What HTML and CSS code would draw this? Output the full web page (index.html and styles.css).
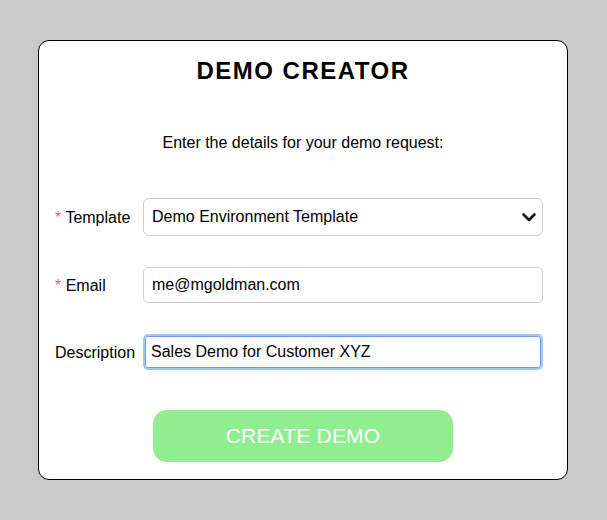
FILE: index.html
```html
<!DOCTYPE html>
<html>
<head>
<meta charset="utf-8">
<link rel="stylesheet" href="styles.css">
</head>
<body>
<div class="card">
  <h1 class="title">DEMO CREATOR</h1>
  <p class="intro">Enter the details for your demo request:</p>
  <div class="row row-template">
    <label class="label"><span class="req">*</span> Template</label>
    <div class="select">
      <span>Demo Environment Template</span>
      <svg class="chev" width="14" height="9" viewBox="0 0 14 9"><path d="M1.5 1.5 L7 7 L12.5 1.5" fill="none" stroke="#111" stroke-width="2.6" stroke-linecap="round" stroke-linejoin="round"/></svg>
    </div>
  </div>
  <div class="row row-email">
    <label class="label"><span class="req">*</span> Email</label>
    <div class="input">me@mgoldman.com</div>
  </div>
  <div class="row row-desc">
    <label class="label">Description</label>
    <div class="input focused">Sales Demo for Customer XYZ</div>
  </div>
  <div class="actions">
    <button class="btn">CREATE DEMO</button>
  </div>
</div>
</body>
</html>
```
FILE: styles.css
```css
* { box-sizing: border-box; }
body {
  margin: 0;
  padding: 40px 0 0 38px;
  background: #c9c9c9;
  font-family: "Liberation Sans", Arial, sans-serif;
  color: #000;
}
.card {
  width: 530px;
  height: 440px;
  background: #fff;
  border: 1px solid #000;
  border-radius: 11px;
  padding: 16px 24px 17px 16px;
  display: flex;
  flex-direction: column;
}
.title {
  margin: 0;
  font-size: 24px;
  line-height: 28px;
  font-weight: bold;
  letter-spacing: 1.5px;
  text-align: center;
  padding-left: 8px;
}
.intro {
  margin: 48px 0 0 0;
  font-size: 16px;
  line-height: 19px;
  text-align: center;
  padding-left: 8px;
}
.row {
  display: grid;
  grid-template-columns: 88px 400px;
  align-items: center;
}
.row-template { margin-top: 46px; }
.row-email { margin-top: 31px; }
.row-desc { margin-top: 31px; }
.label {
  font-size: 16px;
  line-height: 19px;
}
.req { color: #ec6a6a; }
.select {
  height: 38px;
  border: 1px solid #cfcfcf;
  border-radius: 6px;
  display: flex;
  align-items: center;
  justify-content: space-between;
  padding: 0 6px 0 8px;
  font-size: 16px;
}
.chev { margin-top: 1px; }
.input {
  height: 36px;
  border: 1px solid #cfcfcf;
  border-radius: 5px;
  display: flex;
  align-items: center;
  padding: 0 8px;
  font-size: 16px;
}
.input.focused {
  height: 32px;
  margin: 2px;
  border: 1px solid #6d9fe8;
  border-radius: 3px;
  box-shadow: 0 0 0 2px rgba(135, 182, 248, 0.8);
  padding: 0 5px;
}
.actions {
  margin-top: 40px;
  display: flex;
  padding-left: 98px;
}
.btn {
  width: 300px;
  height: 52px;
  border: none;
  border-radius: 14px;
  background: #90ee90;
  color: #fff;
  font-family: "Liberation Sans", Arial, sans-serif;
  font-size: 21px;
  letter-spacing: 0.2px;
  padding: 0;
}
```
